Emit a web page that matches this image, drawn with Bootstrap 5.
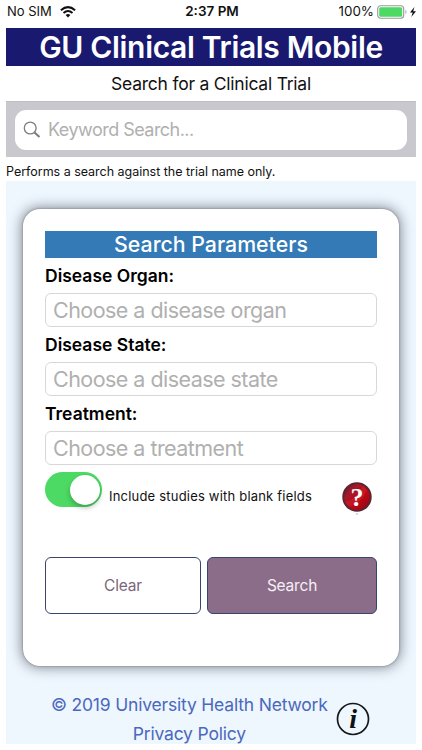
<!DOCTYPE html>
<html lang="en">
<head>
<meta charset="utf-8">
<meta name="viewport" content="width=device-width, initial-scale=1">
<title>GU Clinical Trials Mobile</title>
<link href="https://cdn.jsdelivr.net/npm/bootstrap@5.3.0/dist/css/bootstrap.min.css" rel="stylesheet">
<style>
body{font-family:Inter,"Liberation Sans",sans-serif;color:#111;background:#fff;height:750px;overflow:hidden}
.status{height:28px;padding:0 5px 5px 7px;display:grid;grid-template-columns:1fr auto 1fr;font-size:13px;line-height:23px;color:#111}
.status .clock{font-weight:600;font-size:13.5px}
.battery{font-size:13.4px;margin-right:3px}
.app{margin:0 6px;width:410px}
.brand{height:38px;background:#191970;color:#fff;font-size:30px;line-height:38px;font-weight:600;letter-spacing:-.33px}
.subtitle{height:35px;line-height:35px;font-size:17.5px;letter-spacing:-.23px}
.searchbar{height:56px;background:#c9c8cf;padding:8px 9px;border-top:1px solid #bebdc4}
.searchfield{height:40px;border-radius:11px;padding-left:8px;gap:7px}
.searchfield input,.pick{border:0;outline:0;background:transparent}
.searchfield input{font-size:18px;width:300px;padding:0 0 2px;letter-spacing:-.53px}
input::placeholder{color:#b0b0b0!important;opacity:1}
.hint{height:24px;line-height:29px;font-size:12.5px;letter-spacing:-.02px}
.stage{height:563px;background:#eef6fe;padding:28px 17px 0 17px}
.panel{height:457px;border-radius:17px;background:#fff;box-shadow:0 0 2px 0 #70747a,0 0 13px 1px rgba(60,65,75,.65);padding:22px 22px 0 22px}
.panel-title{height:27px;line-height:27px;background:#337ab7;color:#fff;font-size:21.3px;font-weight:500}
.lbl{display:block;height:35px;line-height:35px;font-size:17.5px;font-weight:600;color:#000;letter-spacing:0}
.pick{display:block;width:100%;height:34px;border:1px solid #d8d8d8;border-radius:6px;padding:0 7px;font-size:21.5px;letter-spacing:-.54px}
.toggle-row{height:44px;margin-top:7px}
.form-switch .form-check-input.ios{width:57px;height:35px;margin:0;border:0;border-radius:18px;background:#4cd964;appearance:none;box-shadow:none}
.ios-wrap{position:relative;width:57px;height:35px;padding:0;margin:0;min-height:0}
.knob{position:absolute;left:25px;top:2.5px;width:30px;height:30px;border-radius:50%;background:#fff;box-shadow:0 3px 5px rgba(0,0,0,.25);pointer-events:none}
.blank{font-size:13px;line-height:20px;margin:14px 0 0 7px;white-space:nowrap;letter-spacing:.2px}
.help{margin:9px 4px 0 auto}
.actions{margin-top:41px;gap:6px}
.actions .btn{height:57px;border:1px solid #36466f;border-radius:6px;font-size:15.5px;letter-spacing:-.2px;padding:0}
.clear{width:156px;color:#7c6678;background:#fff}
.find{width:170px;color:#f5eff5;background:#8b6d89}
.foot{margin-top:24px;padding-left:28px;font-size:17.5px;line-height:29px;letter-spacing:-.19px}
.foot a{color:#4a68bd;text-decoration:none;display:block;white-space:nowrap}
.foot svg{margin:12px 0 0 8px}
</style>
<script src="https://cdn.jsdelivr.net/npm/bootstrap@5.3.0/dist/js/bootstrap.bundle.min.js"></script>
</head>
<body>
<div class="status">
  <div class="d-flex align-items-center"><span class="carrier">No SIM</span>
    <svg class="ms-2" width="16" height="12" viewBox="0 0 16 12" fill="none" stroke="#111" stroke-width="2"><path d="M.9 4.3Q8-2 15.1 4.3M3.5 7Q8 3 12.5 7"/><path d="M8 11.5 5.6 9Q8 7 10.4 9Z" fill="#111" stroke="none"/></svg>
  </div>
  <div class="clock">2:37 PM</div>
  <div class="d-flex align-items-center justify-content-end"><span class="battery">100%</span>
    <svg width="40" height="14" viewBox="0 0 40 14"><rect x=".7" y=".7" width="26" height="12.6" rx="3" fill="#fff" stroke="#999" stroke-width="1.1"/><rect x="2.2" y="2.2" width="23" height="9.6" rx="1.5" fill="#4cd964"/><path d="M28.5 4.8q2 2.2 0 4.4z" fill="#999"/><path d="M37.4 2 33 7.5h2.7L34.3 12 39 6.2h-2.8z" fill="#111"/></svg>
  </div>
</div>
<main class="app">
  <h1 class="brand text-center mb-0">GU Clinical Trials Mobile</h1>
  <div class="subtitle text-center">Search for a Clinical Trial</div>
  <div class="searchbar">
    <div class="searchfield bg-white d-flex align-items-center">
      <svg width="18" height="18" viewBox="0 0 18 18" fill="none" stroke="#7d7d80" stroke-width="1.3"><circle cx="7.2" cy="7" r="5.9"/><path d="m11.5 11.4 5 4.7" stroke-width="2"/></svg>
      <input type="text" placeholder="Keyword Search..." aria-label="Keyword Search">
    </div>
  </div>
  <div class="hint">Performs a search against the trial name only.</div>
  <section class="stage">
    <div class="panel">
      <div class="panel-title text-center">Search Parameters</div>
      <label class="lbl" for="organ">Disease Organ:</label>
      <input class="pick" id="organ" placeholder="Choose a disease organ">
      <label class="lbl" for="state">Disease State:</label>
      <input class="pick" id="state" placeholder="Choose a disease state">
      <label class="lbl" for="treat">Treatment:</label>
      <input class="pick" id="treat" placeholder="Choose a treatment">
      <div class="toggle-row d-flex align-items-start">
        <div class="form-check form-switch ios-wrap"><input class="form-check-input ios" type="checkbox" id="blank" checked><span class="knob"></span></div>
        <label class="blank" for="blank">Include studies with blank fields</label>
        <svg class="help" width="32" height="34" viewBox="0 0 32 34">
          <defs><linearGradient id="red" x1="0" y1="0" x2="1" y2="1"><stop offset="0" stop-color="#611020"/><stop offset=".3" stop-color="#a5192a"/><stop offset=".6" stop-color="#c00612"/><stop offset="1" stop-color="#780e1b"/></linearGradient></defs>
          <circle cx="16" cy="16" r="13.8" fill="url(#red)" stroke="#582631" stroke-width="1.8"/>
          <path d="M4 21Q15 19 22 5l4 4Q21 22 8 26z" fill="#e43a49" opacity=".25"/>
          <text x="16" y="24.5" text-anchor="middle" font-family="Liberation Serif, serif" font-weight="700" font-size="26" fill="#fff">?</text>
          <circle cx="16" cy="33" r=".8" fill="#aaa"/>
        </svg>
      </div>
      <div class="actions d-flex">
        <button class="btn clear" type="button">Clear</button>
        <button class="btn find" type="button">Search</button>
      </div>
    </div>
    <footer class="foot d-flex">
      <div class="text-center"><a href="#">© 2019 University Health Network</a><a href="#">Privacy Policy</a></div>
      <svg width="34" height="34" viewBox="0 0 34 34"><circle cx="17" cy="17" r="15.5" fill="none" stroke="#151719" stroke-width="1.7"/><text x="17" y="25.5" text-anchor="middle" font-family="Liberation Serif, serif" font-style="italic" font-weight="700" font-size="28" fill="#111">i</text></svg>
    </footer>
  </section>
</main>
</body>
</html>
